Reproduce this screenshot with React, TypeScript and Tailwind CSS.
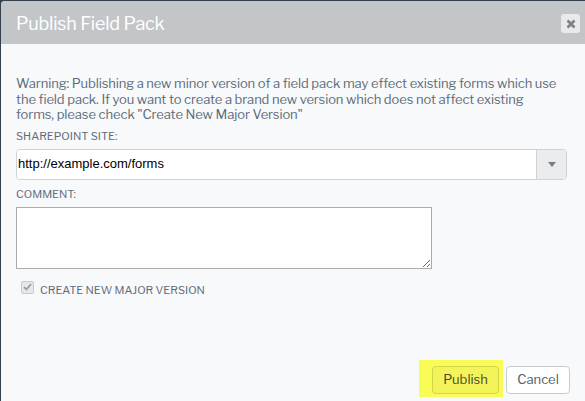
import { useState } from "react";

const sans = { fontFamily: '"Libre Franklin", "Liberation Sans", Arial, sans-serif' };

const App = () => {
  const [site, setSite] = useState("http://example.com/forms");
  const [comment, setComment] = useState("");

  return (
    <div className="w-[585px] h-[401px] bg-[#34404b] pl-px pt-px overflow-hidden" style={sans}>
      <div className="h-[420px] w-[600px] rounded-tl-[4px] bg-[#f8f9fb] overflow-hidden">
        {/* Header */}
        <div className="w-[584px] h-[43px] bg-[#c2c6c9] flex items-center justify-between pl-[15px] pr-[5px]">
          <h2 className="text-[18px] text-white font-normal tracking-[-0.2px] mt-[2px]">Publish Field Pack</h2>
          <button className="w-[19px] h-[19px] rounded-[3px] bg-[#e8eaeb] flex items-center justify-center mt-[2px]">
            <svg width="10" height="10" viewBox="0 0 10 10">
              <path d="M1.5 1.5 L8.5 8.5 M8.5 1.5 L1.5 8.5" stroke="#7d8184" strokeWidth="2.6" strokeLinecap="butt" />
            </svg>
          </button>
        </div>

        {/* Body */}
        <div className="w-[584px] px-[15px] pt-[32px]">
          <p className="text-[13px] leading-[15.5px] text-[#5d6b79] tracking-[-0.1px] whitespace-nowrap">
            Warning: Publishing a new minor version of a field pack may effect existing forms which use
            <br />
            the field pack. If you want to create a brand new version which does not affect existing
            <br />
            forms, please check "Create New Major Version"
          </p>

          <label className="block mt-[7px] text-[11px] text-[#5d6b79] leading-[13px]">SHAREPOINT SITE:</label>
          <div className="mt-[6px] flex w-[551px] h-[31px] rounded-[4px] border border-[#cfd1d3] bg-white overflow-hidden">
            <input
              value={site}
              onChange={(e) => setSite(e.target.value)}
              className="flex-1 px-[1px] text-[13px] text-black outline-none bg-white"
              style={{ fontFamily: '"Liberation Sans", Arial, sans-serif' }}
            />
            <div className="w-[30px] border-l border-[#cfd1d3] bg-[#ebeced] flex items-center justify-center">
              <svg width="8" height="5" viewBox="0 0 8 5">
                <path d="M0 0 H8 L4 5 Z" fill="#7a7d80" />
              </svg>
            </div>
          </div>

          <label className="block mt-[8px] text-[11px] text-[#5d6b79] leading-[13px]">COMMENT:</label>
          <textarea
            value={comment}
            onChange={(e) => setComment(e.target.value)}
            className="block mt-[6px] w-[416px] h-[62px] border border-[#a9abad] bg-white outline-none resize"
          />

          <div className="flex items-center mt-[8px] pl-[5px]">
            <div className="w-[13px] h-[13px] rounded-[2px] border border-[#c8cacc] bg-[#e6e7e8] flex items-center justify-center">
              <svg width="9" height="8" viewBox="0 0 9 8">
                <path d="M1 4.2 L3.4 6.5 L8 1.2" stroke="#9a9c9e" strokeWidth="1.8" fill="none" />
              </svg>
            </div>
            <span className="ml-[6px] text-[11px] text-[#5d6b79] mt-[5px]">CREATE NEW MAJOR VERSION</span>
          </div>
        </div>

        {/* Footer */}
        <div className="w-[584px] flex justify-end items-start mt-[62px] pr-[15px]">
          <div className="bg-[#f9fb56] pl-[13px] pr-[4px] pt-[6px] pb-[3px]">
            <button className="h-[28px] w-[67px] rounded-[4px] border border-[#d3d447] bg-[#f3f459] text-[13px] text-[#4a4a30]">
              Publish
            </button>
          </div>
          <button className="ml-[3px] mt-[6px] h-[28px] w-[64px] rounded-[4px] border border-[#c9cccf] bg-white text-[13px] text-[#4f5c6a]">
            Cancel
          </button>
        </div>
      </div>
    </div>
  );
};

export default App;
